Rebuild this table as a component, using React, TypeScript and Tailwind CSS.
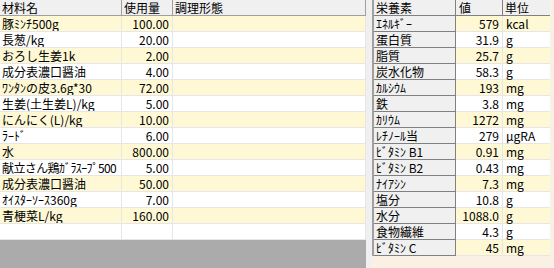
import React from 'react';

type Ing = { name: string; qty: string };
type Nut = { name: string; value: string; unit: string };

const ingredients: Ing[] = [
    { name: '豚ﾐﾝﾁ500g', qty: '100.00' },
    { name: '長葱/kg', qty: '20.00' },
    { name: 'おろし生姜1k', qty: '2.00' },
    { name: '成分表濃口醤油', qty: '4.00' },
    { name: 'ﾜﾝﾀﾝの皮3.6g*30', qty: '72.00' },
    { name: '生姜(土生姜L)/kg', qty: '5.00' },
    { name: 'にんにく(L)/kg', qty: '10.00' },
    { name: 'ﾗｰﾄﾞ', qty: '6.00' },
    { name: '水', qty: '800.00' },
    { name: '献立さん鶏ｶﾞﾗｽｰﾌﾟ500', qty: '5.00' },
    { name: '成分表濃口醤油', qty: '50.00' },
    { name: 'ｵｲｽﾀｰｿｰｽ360g', qty: '7.00' },
    { name: '青梗菜L/kg', qty: '160.00' },
    { name: '', qty: '' },
];

const nutrients: Nut[] = [
    { name: 'ｴﾈﾙｷﾞｰ', value: '579', unit: 'kcal' },
    { name: '蛋白質', value: '31.9', unit: 'g' },
    { name: '脂質', value: '25.7', unit: 'g' },
    { name: '炭水化物', value: '58.3', unit: 'g' },
    { name: 'ｶﾙｼｳﾑ', value: '193', unit: 'mg' },
    { name: '鉄', value: '3.8', unit: 'mg' },
    { name: 'ｶﾘｳﾑ', value: '1272', unit: 'mg' },
    { name: 'ﾚﾁﾉｰﾙ当', value: '279', unit: 'μgRA' },
    { name: 'ﾋﾞﾀﾐﾝ B1', value: '0.91', unit: 'mg' },
    { name: 'ﾋﾞﾀﾐﾝ B2', value: '0.43', unit: 'mg' },
    { name: 'ﾅｲｱｼﾝ', value: '7.3', unit: 'mg' },
    { name: '塩分', value: '10.8', unit: 'g' },
    { name: '水分', value: '1088.0', unit: 'g' },
    { name: '食物繊維', value: '4.3', unit: 'g' },
    { name: 'ﾋﾞﾀﾐﾝ C', value: '45', unit: 'mg' },
];

const font = "font-['MS_UI_Gothic','Noto_Sans_CJK_JP',sans-serif]";

const App: React.FC = () => {
    return (
        <div className={`flex w-[554px] h-[268px] overflow-hidden bg-[#f0f0f0] text-[12px] leading-none text-black ${font}`}>
            {/* ingredient grid */}
            <div className="flex flex-col w-[366px] h-full bg-[#ababab]">
                <div className="flex h-[16px] bg-[#f0f0f0] border-b border-[#a0a0a0]">
                    <div className="w-[122px] px-[2px] flex items-center border-r border-[#a0a0a0]">材料名</div>
                    <div className="w-[51px] px-[2px] flex items-center border-r border-[#a0a0a0]">使用量</div>
                    <div className="flex-1 px-[2px] flex items-center border-r border-[#a0a0a0]">調理形態</div>
                </div>
                {ingredients.map((r, i) => (
                    <div key={i} className={`flex h-[16px] border-b border-[#e6e6e6] ${i % 2 === 0 && r.name ? 'bg-[#fef8d5]' : 'bg-white'}`}>
                        <div className={`w-[122px] pl-[2px] flex items-center border-r border-[#e6e6e6] whitespace-nowrap overflow-hidden ${r.name.length > 14 ? 'tracking-[-0.6px]' : ''}`}>{r.name}</div>
                        <div className="w-[51px] px-[3px] flex items-center justify-end border-r border-[#e6e6e6]">{r.qty}</div>
                        <div className="flex-1 border-r border-[#e6e6e6]"></div>
                    </div>
                ))}
            </div>

            {/* splitter */}
            <div className="w-[6px] h-full bg-[#f0f0f0]"></div>

            {/* nutrient panel */}
            <div className="flex-1 h-full bg-[#fbf0e4] pr-[4px]">
                <div className="border-l-2 border-[#a0a0a0] bg-white">
                    <div className="flex h-[16px] bg-[#f0f0f0] border-b border-[#808080]">
                        <div className="w-[82px] px-[2px] flex items-center border-r border-[#808080]">栄養素</div>
                        <div className="w-[47px] px-[3px] flex items-center border-r border-[#808080]">値</div>
                        <div className="flex-1 px-[2px] flex items-center">単位</div>
                    </div>
                    {nutrients.map((n, i) => (
                        <div key={n.name} className="flex h-[16px] border-b border-[#e6e6e6]">
                            <div className="w-[82px] px-[2px] flex items-center bg-[#f0f0f0] border-r border-[#808080] border-b border-b-[#808080] -mb-px whitespace-nowrap">{n.name}</div>
                            <div className={`w-[47px] px-[3px] flex items-center justify-end border-r border-[#e6e6e6] ${i % 2 === 0 ? 'bg-[#fef8d5]' : 'bg-white'}`}>{n.value}</div>
                            <div className={`flex-1 px-[3px] flex items-center ${i % 2 === 0 ? 'bg-[#fef8d5]' : 'bg-white'}`}>{n.unit}</div>
                        </div>
                    ))}
                </div>
            </div>
        </div>
    );
};

export default App;
